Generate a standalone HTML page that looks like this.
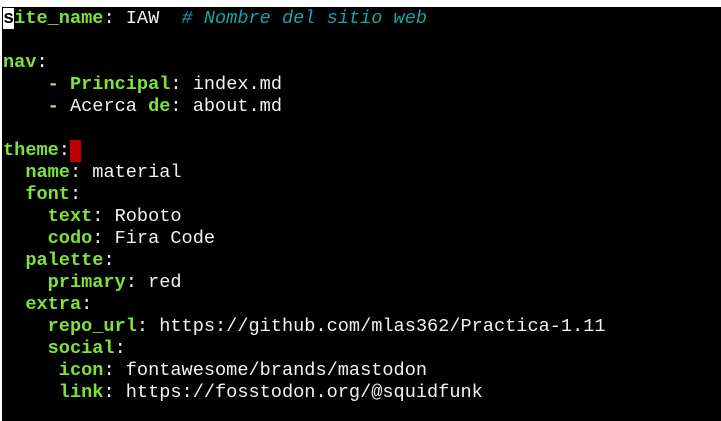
<!DOCTYPE html><html><head><style>
html,body{margin:0;padding:0;width:721px;height:421px;overflow:hidden;background:#fff}
#t{position:absolute;left:2px;top:7px;width:719px;height:414px;background:#000}
pre{position:absolute;left:1px;top:1px;margin:0;font-family:"Liberation Mono",monospace;font-size:18.6px;line-height:22px;color:#f2f2f2;white-space:pre}
.k{color:#7fe23a;font-weight:bold}
.y{color:#f5d142;font-weight:bold}
.c{color:#19a3a3;font-style:italic}
.s{background:#fff;color:#000;font-weight:bold}
.cur{display:inline-block;width:11px;height:22px;background:#c00000;vertical-align:top}
#top{position:absolute;left:30px;top:-15px;font-family:"Liberation Mono",monospace;font-size:18.6px;font-weight:bold;color:#000;white-space:pre}
</style></head><body>
<div id="top">ist name IAW</div>
<div id="t"><pre><span class="s">s</span><span class="k">ite_name</span>: IAW  <span class="c"># Nombre del sitio web</span>

<span class="k">nav</span>:
    <span class="y">-</span> <span class="k">Principal</span>: index.md
    <span class="y">-</span> Acerca <span class="k">de</span>: about.md

<span class="k">theme</span>:<span class="cur"></span>
  <span class="k">name</span>: material
  <span class="k">font</span>:
    <span class="k">text</span>: Roboto
    <span class="k">codo</span>: Fira Code
  <span class="k">palette</span>:
    <span class="k">primary</span>: red
  <span class="k">extra</span>:
    <span class="k">repo_url</span>: https://github.com/mlas362/Practica-1.11
    <span class="k">social</span>:
     <span class="k">icon</span>: fontawesome/brands/mastodon
     <span class="k">link</span>: https://fosstodon.org/@squidfunk
</pre></div>
</body></html>
